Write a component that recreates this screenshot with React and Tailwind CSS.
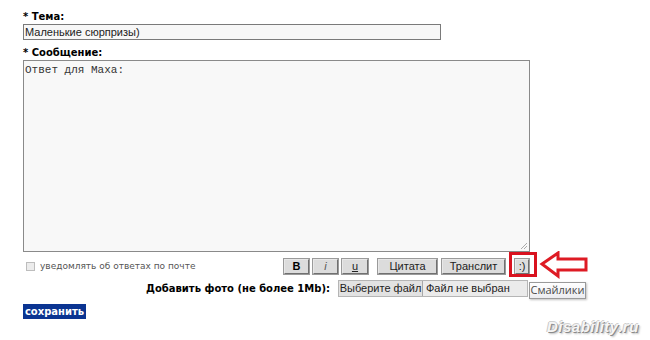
import React from "react";

const verd = { fontFamily: '"DejaVu Sans", Verdana, sans-serif' };
const arial = { fontFamily: '"Liberation Sans", Arial, sans-serif' };

function Btn({ children, className = "" }) {
  return (
    <div
      className={`h-[15px] flex items-center justify-center bg-[#dcdcdc] border border-t-[#e8e8e8] border-l-[#e8e8e8] border-r-[#707070] border-b-[#707070] outline outline-1 outline-[#9a9a9a] text-[11px] text-[#222] leading-none ${className}`}
      style={arial}
    >
      {children}
    </div>
  );
}

export default function App() {
  return (
    <div className="relative w-[650px] h-[340px] bg-white overflow-hidden">
      <div className="pl-[23px] pt-[11px] w-[530px]">
        <div className="text-[10px] font-bold text-black leading-[12px]" style={verd}>* Тема:</div>
        <div
          className="mt-[1px] w-[418px] h-[16px] border border-[#7a7a7a] bg-[#f7f7f7] flex items-center pl-[1px] text-[11px] text-[#222]"
          style={arial}
        >
          Маленькие сюрпризы)
        </div>
        <div className="mt-[7px] text-[10px] font-bold text-black leading-[12px]" style={verd}>* Сообщение:</div>
        <div
          className="relative mt-[1px] w-[507px] h-[192px] border border-[#8a8a8a] bg-[#f8f8f8] pl-[1px] pt-[3px] text-[11px] leading-[13px] text-[#333]"
          style={{ fontFamily: '"Liberation Mono", "Courier New", monospace' }}
        >
          Ответ для Маха:
          <svg className="absolute right-[1px] bottom-[1px]" width="8" height="8" viewBox="0 0 8 8">
            <path d="M7 1 L1 7 M7 4 L4 7" stroke="#aaa" strokeWidth="1" />
          </svg>
        </div>
        <div className="mt-[7px] w-[507px] h-[15px] flex items-center">
          <div className="ml-[3px] w-[9px] h-[9px] border border-[#bdbdbd] bg-[#ececec]" />
          <div className="ml-[5px] text-[9px] text-[#555] whitespace-nowrap" style={verd}>уведомлять об ответах по почте</div>
          <div className="ml-auto flex items-center">
            <Btn className="w-[25px] font-bold text-black">B</Btn>
            <Btn className="ml-[4px] w-[25px] italic text-[#555]">i</Btn>
            <Btn className="ml-[4px] w-[26px] underline">u</Btn>
            <Btn className="ml-[10px] w-[59px]">Цитата</Btn>
            <Btn className="ml-[5px] w-[63px]">Транслит</Btn>
            <Btn className="ml-[10px] w-[14px] mr-[1px]">:)</Btn>
          </div>
        </div>
        <div className="mt-[6px] w-[507px] h-[17px] flex items-center justify-end">
          <div className="text-[10px] font-bold text-black whitespace-nowrap" style={verd}>Добавить фото (не более 1Mb):</div>
          <div
            className="ml-[8px] mr-[2px] w-[190px] h-[17px] flex items-center bg-[#ebebeb] border border-[#b5b5b5] text-[11px] text-[#222] whitespace-nowrap"
            style={arial}
          >
            <div className="h-[15px] w-[84px] flex items-center justify-center bg-[#e2e2e2] border-r border-[#a8a8a8]">Выберите файл</div>
            <div className="ml-[3px]">Файл не выбран</div>
          </div>
        </div>
        <div className="mt-[7px] w-[63px] h-[15px] bg-[#0a3491] flex items-center justify-center text-white text-[10px] font-bold" style={verd}>
          сохранить
        </div>
      </div>

      {/* annotation: red box */}
      <div className="absolute left-[509px] top-[252px] w-[28px] h-[25px] border-[3px] border-[#d9121f]" />
      {/* annotation: arrow */}
      <svg className="absolute left-[539px] top-[251px]" width="50" height="28" viewBox="0 0 50 28">
        <path d="M3 13 L19 2 L19 8 L47 8 L47 19 L19 19 L19 25 Z" fill="white" stroke="#de1b24" strokeWidth="3" strokeLinejoin="miter" />
      </svg>
      {/* tooltip */}
      <div
        className="absolute left-[529px] top-[282px] w-[57px] h-[17px] border border-[#9a9a9a] bg-gradient-to-b from-white to-[#ececf0] shadow-[1px_1px_2px_rgba(0,0,0,0.25)] flex items-center justify-center text-[11px] text-[#4a4a4a]"
        style={{ fontFamily: '"Open Sans", "Noto Sans", sans-serif' }}
      >
        Смайлики
      </div>
      {/* watermark */}
      <div
        className="absolute left-[547px] top-[316px] text-[15px] italic font-bold text-[#f6f6f6] tracking-[0.5px] whitespace-nowrap"
        style={{
          fontFamily: '"Liberation Sans", Arial, sans-serif',
          textShadow: "1px 1px 0 #8a8a8a, -1px 0 0 #c8c8c8, 0 -1px 0 #d0d0d0, 2px 2px 2px rgba(0,0,0,0.25)",
        }}
      >
        Disability.ru
      </div>
    </div>
  );
}
